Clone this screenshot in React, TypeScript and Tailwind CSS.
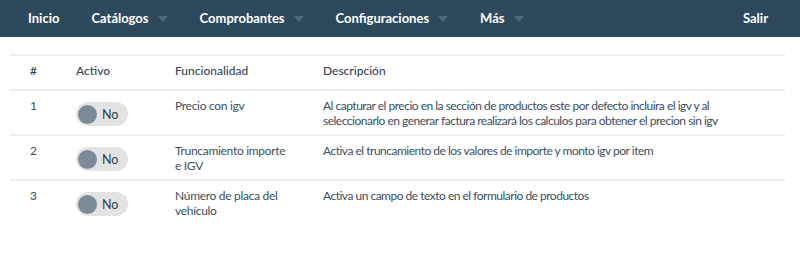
const NAV = [
  { label: 'Inicio', caret: false },
  { label: 'Catálogos', caret: true },
  { label: 'Comprobantes', caret: true },
  { label: 'Configuraciones', caret: true },
  { label: 'Más', caret: true },
];

const ROWS = [
  {
    id: 1,
    name: 'Precio con igv',
    desc: 'Al capturar el precio en la sección de productos este por defecto incluira el igv y al seleccionarlo en generar factura realizará los calculos para obtener el precion sin igv',
  },
  { id: 2, name: 'Truncamiento importe e IGV', desc: 'Activa el truncamiento de los valores de importe y monto igv por item' },
  { id: 3, name: 'Número de placa del vehículo', desc: 'Activa un campo de texto en el formulario de productos' },
];

const COLS = 'grid grid-cols-[46px_99px_148px_1fr]';

function Toggle() {
  return (
    <div className="mt-1 flex h-[24px] w-[52px] items-center rounded-full bg-[#e3e3e3] pl-[2px]">
      <span className="h-[19px] w-[19px] rounded-full bg-[#7a8a99]" />
      <span className="ml-[5px] text-[12.5px] text-[#2c3e50]">No</span>
    </div>
  );
}

export default function App() {
  return (
    <div className="min-h-[269px] bg-white font-['Lato','Liberation_Sans',sans-serif] text-[12px] leading-[15px] text-[#3d4e5e]">
      <nav className="flex h-[37px] items-center bg-[#2c495e] pl-[28px] pr-[32px] text-[13px] font-bold text-white">
        <ul className="flex items-center gap-[32px]">
          {NAV.map(n => (
            <li key={n.label} className="flex items-center">
              {n.label}
              {n.caret && (
                <svg width="10" height="6" viewBox="0 0 10 6" className="ml-[9px]">
                  <path d="M0 0h10L5 6z" fill="#4d687c" />
                </svg>
              )}
            </li>
          ))}
        </ul>
        <span className="ml-auto">Salir</span>
      </nav>

      <div className="ml-[10px] mt-[17px] w-[775px]">
        <div className={`${COLS} border-t-2 border-[#eceeef] pt-[7px] pb-[11px] font-medium text-[#344656]`}>
          <div className="pl-[20px]">#</div>
          <div className="pl-[20px]">Activo</div>
          <div className="pl-[20px]">Funcionalidad</div>
          <div className="pl-[20px]">Descripción</div>
        </div>
        {ROWS.map(r => (
          <div key={r.id} className={`${COLS} min-h-[45px] border-t-2 border-[#eceeef] pt-[7px] pb-[6px]`}>
            <div className="pl-[20px]">{r.id}</div>
            <div className="pl-[20px]">
              <Toggle />
            </div>
            <div className="pl-[20px] pr-[12px] tracking-[-0.3px]">{r.name}</div>
            <div className="pl-[20px] pr-[30px] tracking-[-0.5px]">{r.desc}</div>
          </div>
        ))}
      </div>
    </div>
  );
}
